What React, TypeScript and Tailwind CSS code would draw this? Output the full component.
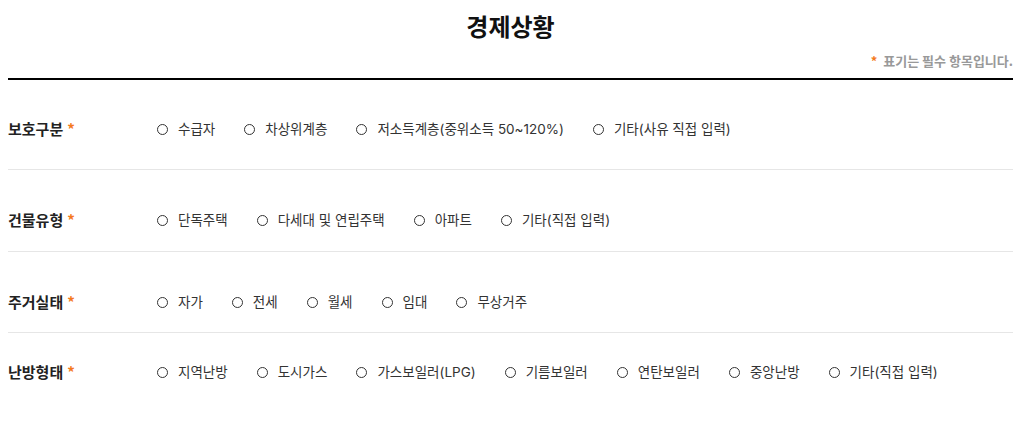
import React from 'react';

type Row = {
    label: string;
    options: string[];
    pad: string;
};

const rows: Row[] = [
    { label: '보호구분', options: ['수급자', '차상위계층', '저소득계층(중위소득 50~120%)', '기타(사유 직접 입력)'], pad: 'pt-[39px] pb-[30px] border-b' },
    { label: '건물유형', options: ['단독주택', '다세대 및 연립주택', '아파트', '기타(직접 입력)'], pad: 'pt-[40px] pb-[21px] border-b' },
    { label: '주거실태', options: ['자가', '전세', '월세', '임대', '무상거주'], pad: 'pt-[40px] pb-[20px] border-b' },
    { label: '난방형태', options: ['지역난방', '도시가스', '가스보일러(LPG)', '기름보일러', '연탄보일러', '중앙난방', '기타(직접 입력)'], pad: 'pt-[29px] pb-[30px]' },
];

function Radio({ text }: { text: string }) {
    return (
        <label className="flex items-center">
            <span className="box-border h-[11px] w-[11px] shrink-0 rounded-full border-[1.5px] border-[#333]" />
            <span className="ml-[10px] font-['Inter','Noto_Sans_CJK_KR',sans-serif] text-[13.5px] leading-[20px] text-[#333]">{text}</span>
        </label>
    );
}

export default function App() {
    return (
        <div className="min-h-screen bg-white font-['Noto_Sans_CJK_KR',sans-serif]">
            <section className="ml-2 mr-5 pt-[10px]">
                <h2 className="text-center text-[24px] font-bold leading-[32px] text-[#111]">경제상황</h2>
                <p className="mt-[11px] text-right text-[13px] font-bold leading-[16px] text-[#999]">
                    <span className="mr-[6px] text-[#f47920]">*</span>표기는 필수 항목입니다.
                </p>
                <div className="mt-[9px] h-[2px] bg-black" />

                {rows.map((row) => (
                    <div key={row.label} className={`flex items-center border-[#e6e6e6] ${row.pad}`}>
                        <div className="w-[149px] shrink-0 text-[15px] font-bold leading-[20px] text-[#222]">
                            {row.label}
                            <span className="ml-[4px] text-[#f47920]">*</span>
                        </div>
                        <div className="flex items-center gap-x-[29px]">
                            {row.options.map((o) => (
                                <Radio key={o} text={o} />
                            ))}
                        </div>
                    </div>
                ))}
            </section>
        </div>
    );
}
